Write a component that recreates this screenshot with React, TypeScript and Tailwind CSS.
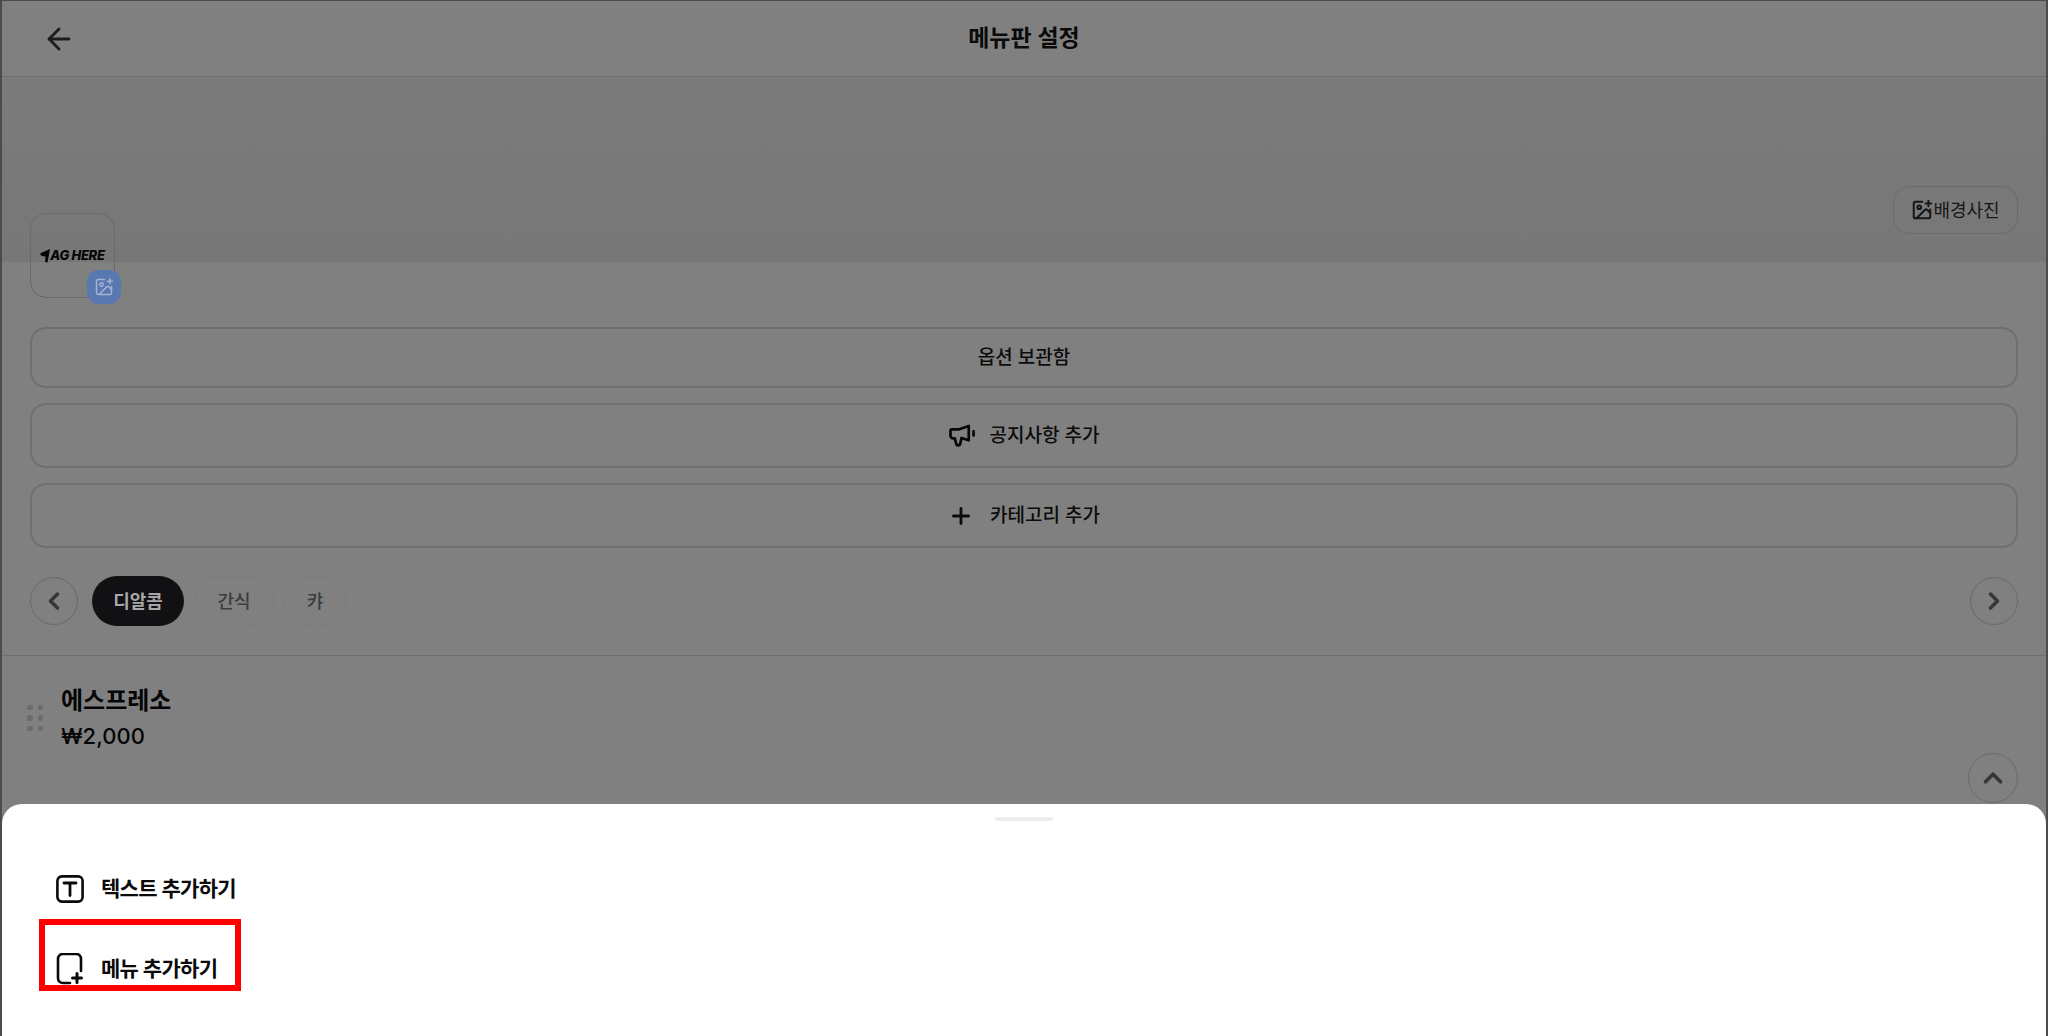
import React from 'react';
import { ArrowLeft, ChevronLeft, ChevronRight, ChevronUp, ImagePlus, Plus } from 'lucide-react';

const FONT = "font-['Inter','Noto_Sans_CJK_KR','Noto_Sans',sans-serif]";

const ActionButton: React.FC<{ className: string; children: React.ReactNode }> = ({ className, children }) => (
  <button className={`flex w-full items-center justify-center rounded-[16px] border-2 border-[#6f6f6f] pt-px text-[19px] font-medium text-[#0c0c0c] ${className}`}>
    {children}
  </button>
);

const CircleButton: React.FC<{ className?: string; children: React.ReactNode }> = ({ className = '', children }) => (
  <button className={`flex h-12 w-12 shrink-0 items-center justify-center rounded-full border border-[#6a6a6a] text-[#363636] ${className}`}>
    {children}
  </button>
);

const MegaphoneIcon = () => (
  <svg width="27" height="25" viewBox="0 0 28 26" fill="none" stroke="#080808" strokeWidth="2.8" strokeLinecap="round" strokeLinejoin="round">
    <path d="M3 5.5h7.5L20.5 2v15l-7.5-2.5-1.5 6.5c-.4 1.6-3.4 1.6-4-.2L6 15H4.5C2.6 15 1.5 13.6 1.5 12V7c0-.9.6-1.5 1.5-1.5z" />
    <path d="M25.5 7.5v4.5" />
  </svg>
);

const TextIcon = () => (
  <svg width="28" height="28" viewBox="0 0 28 28" fill="none" stroke="#0a0a0a" strokeLinecap="round">
    <rect x="1.4" y="1.4" width="25.2" height="25.2" rx="4.5" strokeWidth="2.6" />
    <path d="M8 8h12M14 8v12.5" strokeWidth="2.8" />
  </svg>
);

const MenuAddIcon = () => (
  <svg width="28" height="32" viewBox="0 0 28 32" fill="none" stroke="#0a0a0a" strokeWidth="2.6" strokeLinecap="round">
    <path d="M14 30H7c-3 0-5-2-5-5V6c0-3 2-5 5-5h13c3 0 5 2 5 5v12" />
    <path d="M16.5 25h9M21 20.5v9" strokeWidth="3" />
  </svg>
);

const DragDots = () => (
  <div className="grid w-[16px] shrink-0 grid-cols-2 gap-x-[5px] gap-y-[5px]">
    {[0, 1, 2, 3, 4, 5].map((i) => (
      <span key={i} className="h-[5.5px] w-[5.5px] rounded-[2px] bg-[#6b6b6b]" />
    ))}
  </div>
);

export default function App() {
  return (
    <div className={`relative h-screen w-full overflow-hidden border-x-2 border-t border-[#4c4c4c] bg-[#808080] ${FONT}`}>
      <header className="relative flex h-[76px] items-center border-b border-[#6e6e6e] pl-[40px]">
        <ArrowLeft size={34} strokeWidth={2} className="text-[#1c1c1c]" />
        <h1 className="absolute inset-x-0 text-center text-[23px] font-semibold text-[#0a0a0a]">메뉴판 설정</h1>
      </header>

      <section className="flex h-[185px] items-end justify-end bg-gradient-to-b from-[#7b7b7b] to-[#777777] pb-[28px] pr-[28px]">
        <button className="flex h-[48px] w-[125px] items-center justify-center rounded-[16px] border border-[#6a6a6a] text-[18px] text-[#171717]">
          <ImagePlus size={22} strokeWidth={2.2} />
          <span>배경사진</span>
        </button>
      </section>

      <div className="relative h-[65px]">
        <div className="absolute left-[28px] top-[-49px] flex h-[85px] w-[85px] items-center justify-center rounded-[16px] border border-[#6a6a6a]">
          <div className="flex items-center">
            <svg width="11" height="14" viewBox="0 0 11 14" fill="#050505" className="-mr-[1px]">
              <path d="M0 4.5 10 0 7.5 13.5 5 13 5.5 7.5 1.5 7z" />
            </svg>
            <span className="text-[13px] font-extrabold italic tracking-[-0.3px] text-[#050505]">AG HERE</span>
          </div>
          <span className="absolute left-[56px] top-[56px] flex h-[34px] w-[34px] items-center justify-center rounded-[12px] bg-[#5878b2] text-[#a5b4d1]">
            <ImagePlus size={20} strokeWidth={1.8} />
          </span>
        </div>
      </div>

      <main className="flex flex-col gap-[15px] px-[28px]">
        <ActionButton className="h-[61px]">옵션 보관함</ActionButton>
        <ActionButton className="h-[65px] gap-[14px]">
          <MegaphoneIcon />
          공지사항 추가
        </ActionButton>
        <ActionButton className="h-[65px] gap-[16px]">
          <Plus size={26} strokeWidth={2.6} />
          카테고리 추가
        </ActionButton>
      </main>

      <nav className="mt-[29px] flex h-[79px] items-start border-b border-[#6e6e6e] px-[28px]">
        <CircleButton>
          <ChevronLeft size={28} strokeWidth={3} />
        </CircleButton>
        <div className="-mt-px ml-[14px] flex items-center gap-[10px]">
          <span className="flex h-[50px] w-[92px] items-center justify-center rounded-full bg-[#111113] text-[18px] font-bold text-[#a8a8a8]">디알콤</span>
          <span className="flex h-[50px] w-[80px] items-center justify-center rounded-full border border-[#7c7c7c] text-[18px] font-medium text-[#3c3c3c]">간식</span>
          <span className="flex h-[50px] w-[62px] items-center justify-center rounded-full border border-[#7c7c7c] text-[18px] font-medium text-[#3c3c3c]">캬</span>
        </div>
        <CircleButton className="ml-auto">
          <ChevronRight size={28} strokeWidth={3} />
        </CircleButton>
      </nav>

      <section className="relative flex items-center gap-[18px] px-[25px] pt-[27px]">
        <DragDots />
        <div>
          <h2 className="text-[24px] font-semibold leading-[36px] text-[#050505]">에스프레소</h2>
          <p className="text-[22px] font-medium leading-[34px] text-[#050505]">₩2,000</p>
        </div>
        <CircleButton className="absolute right-[28px] top-[97px] h-[50px] w-[50px]">
          <ChevronUp size={30} strokeWidth={3} />
        </CircleButton>
      </section>

      {/* 바텀시트 */}
      <div className="absolute inset-x-0 bottom-0 h-[232px] rounded-t-[20px] bg-white">
        <div className="mx-auto mt-[13px] h-[4px] w-[58px] rounded-full bg-[#ececec]" />
        <div className="mt-[54px] flex flex-col gap-[52px] pl-[54px]">
          <div className="flex h-[28px] items-center gap-[17px] text-[21px] font-semibold tracking-[-0.7px] text-[#0a0a0a]">
            <TextIcon />
            텍스트 추가하기
          </div>
          <div className="flex h-[28px] items-center gap-[17px] text-[21px] font-semibold tracking-[-0.7px] text-[#0a0a0a]">
            <MenuAddIcon />
            메뉴 추가하기
          </div>
        </div>
        <div className="absolute left-[37px] top-[115px] h-[72px] w-[202px] border-[6px] border-[#ff0000]" />
      </div>
    </div>
  );
}
